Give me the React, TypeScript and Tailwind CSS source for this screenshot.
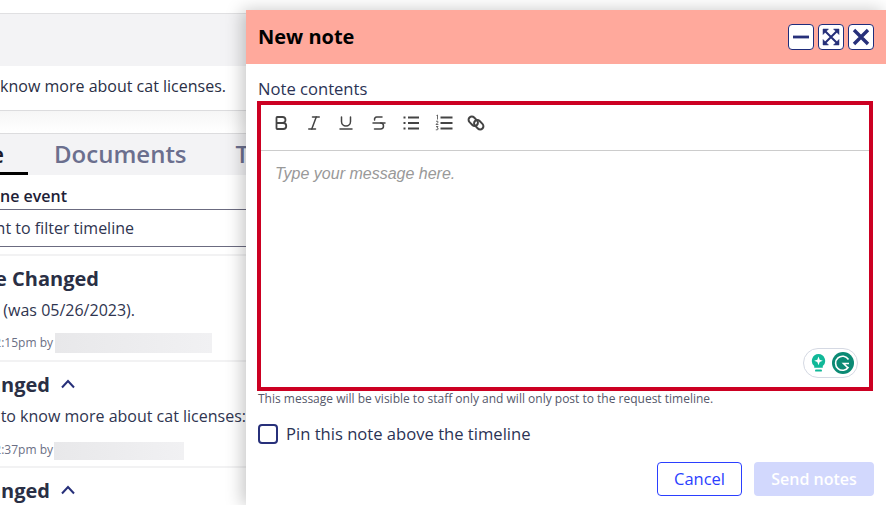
import { Bold, Italic, Underline, Strikethrough } from "lucide-react";

const font = { fontFamily: '"Open Sans", sans-serif' };

function Chevron() {
  return <svg width="16" height="10" viewBox="0 0 16 10" fill="none" stroke="#27307a" strokeWidth="2"><path d="M2 8.5 L8 2 L14 8.5" /></svg>;
}

function Event({ title, chevron, body, stamp, nameW, nameH, stampTop, stampW, h }: { title: string; chevron?: boolean; body: string; stamp: string; nameW: number; nameH: number; stampTop: string; stampW: number; h: string }) {
  return (
    <div className={`${h} border-b-2 border-[#f2f2f3] overflow-hidden`}>
      <div className="flex justify-end whitespace-nowrap text-[20px] leading-[28px] font-bold text-[#2a2f45] h-[28px] mt-[9px]" style={{ width: chevron ? 50 : 99 }}>{title}</div>
      <div className="text-[16px] leading-[22px] text-[#2f3550] whitespace-nowrap flex justify-end mt-[6px]" style={{ width: chevron ? 246 : 135 }}>{body}</div>
      <div className={`flex items-center ${stampTop} h-[20px]`}>
        <div className="flex justify-end whitespace-nowrap text-[12px] text-[#6b6f85]" style={{ width: stampW }}>{stamp}</div>
        <div className="bg-gradient-to-r from-[#e8e8ea] to-[#f1f1f3]" style={{ width: nameW, height: nameH, marginTop: nameH === 18 ? 2 : 0, marginLeft: 54 - stampW + (nameW === 157 ? 1 : 0) }} />
      </div>
    </div>
  );
}

function WinBtn({ children }: { children: React.ReactNode }) {
  return <button className="w-[26px] h-[26px] bg-white border border-[#1f2d7b] rounded-[4px] flex items-center justify-center">{children}</button>;
}

export default function App() {
  return (
    <div className="relative w-[886px] h-[505px] overflow-hidden bg-white" style={font}>
      {/* page behind */}
      <div className="w-[246px] pt-[13px]">
        <div className="h-[53px] bg-[#f3f3f5] border-t border-[#e0e0e2]" />
        <div className="h-[45px] border-b border-[#dcdcde] bg-white flex justify-end pr-[20px] pt-[9px] text-[16px] leading-[22px] text-[#2a2f45] whitespace-nowrap">I want to know more about cat licenses.</div>
        <div className="h-[22px] bg-gradient-to-b from-[#f6f6f6] to-white" />
        <div className="h-[42px] bg-[#f3f3f5] border-t border-[#dcdcde] flex whitespace-nowrap text-[24px] leading-[40px] font-semibold text-[#6b6f8e]">
          <div className="w-[28px] shrink-0 border-b-[3px] border-black flex justify-end pr-[24px] text-[#1a1a2a] h-[41px] overflow-hidden">Timeline</div>
          <div className="ml-[26px] shrink-0">Documents</div>
          <div className="ml-[49px] shrink-0">Tasks</div>
        </div>
        <div className="flex justify-end w-[67px] whitespace-nowrap text-[16px] leading-[22px] font-semibold text-[#1d2136] mt-[10px]">Timeline event</div>
        <div className="h-[38px] border-y border-[#6b6b80] mt-[2px] text-[16px] leading-[36px] text-[#2f3550]">
          <div className="flex justify-end w-[134px] whitespace-nowrap">Type an event to filter timeline</div>
        </div>
        <div className="mt-[7px] border-t-2 border-[#f2f2f3]" />
        <Event h="h-[106px]" title="Due Date Changed" body="06/02/2023 (was 05/26/2023)." stamp="May 30, 2023 12:15pm by" nameW={157} nameH={20} stampTop="mt-[12px]" stampW={53} />
        <Event h="h-[106px]" title="Message Changed" chevron body="I want to know more about cat licenses:" stamp="May 25, 2023 2:37pm by" nameW={130} nameH={18} stampTop="mt-[13px]" stampW={53} />
        <div className="flex justify-end whitespace-nowrap text-[20px] leading-[28px] font-bold text-[#2a2f45] w-[50px] mt-[9px]">Changed</div>
      </div>
      <div className="absolute left-[60px] top-[379px]"><Chevron /></div>
      <div className="absolute left-[60px] top-[485px]"><Chevron /></div>

      {/* dialog */}
      <div className="absolute left-[246px] top-[10px] right-0 bottom-0 bg-white flex flex-col shadow-[-4px_0_16px_rgba(0,0,0,0.22)]">
        <div className="h-[54px] bg-[#ffa99c] flex items-center justify-between pl-[12px] pr-[12px] shrink-0">
          <h2 className="text-[20px] font-bold text-black leading-none">New note</h2>
          <div className="flex gap-[4px]">
            <WinBtn>
              <svg width="18" height="18" viewBox="0 0 18 18"><rect x="1" y="7.6" width="16" height="2.8" fill="#27307a" /></svg>
            </WinBtn>
            <WinBtn>
              <svg width="18" height="18" viewBox="0 0 18 18" fill="#27307a" stroke="#27307a">
                <path d="M1 1h5.5L1 6.5zM17 1v5.5L11.5 1zM1 17v-5.5L6.5 17zM17 17h-5.5L17 11.5z" strokeWidth="0.5" />
                <path d="M3 3l12 12M15 3L3 15" strokeWidth="2" fill="none" />
              </svg>
            </WinBtn>
            <WinBtn>
              <svg width="18" height="18" viewBox="0 0 18 18" fill="none" stroke="#27307a" strokeWidth="3.4"><path d="M2 2l14 14M16 2L2 16" /></svg>
            </WinBtn>
          </div>
        </div>
        <div className="px-[12px] flex-1 flex flex-col">
          <label className="text-[16.6px] font-medium leading-[22px] text-[#2b3355] mt-[14px]">Note contents</label>
          <div className="h-[290px] mt-[1px] -ml-[1px] mr-[-1px] w-[616px] border-[4px] border-[#cc0022] flex flex-col relative">
            <div className="h-[36px] pb-[9px] box-content border-b border-[#cccccc] flex items-center gap-[14.5px] pl-[11px] text-[#444444]">
              <Bold size={18} strokeWidth={2.4} />
              <Italic size={18} strokeWidth={2} />
              <Underline size={18} strokeWidth={2} />
              <Strikethrough size={18} strokeWidth={2} />
              <svg width="18" height="18" viewBox="0 0 18 18" stroke="currentColor" strokeWidth="1.8" fill="none">
                <path d="M6 3.5h11M6 9h11M6 14.5h11M1.5 3.5h2M1.5 9h2M1.5 14.5h2" />
              </svg>
              <svg width="18" height="18" viewBox="0 0 18 18" stroke="currentColor" fill="none">
                <path d="M5.5 3.5h12M5.5 9h12M5.5 14.5h12" strokeWidth="1.8" />
                <path d="M1.5 1.5l1-.5v4.5M1 7.5q1-1 2 0q.4 1-2 3h2.4M1 12.5h2l-1 1.3q1.4 0 1.2 1.2t-2.4.8" strokeWidth="0.8" />
              </svg>
              <svg width="18" height="18" viewBox="0 0 18 18" stroke="currentColor" strokeWidth="2" fill="none">
                <rect x="1" y="4" width="10.5" height="6.5" rx="3.25" transform="rotate(45 6.25 7.25)" />
                <rect x="6.5" y="7.5" width="10.5" height="6.5" rx="3.25" transform="rotate(45 11.75 10.75)" />
              </svg>
            </div>
            <div className="pl-[14px] pt-[12px] text-[16px] leading-[22px] italic text-[#999999]" style={{ fontFamily: '"Liberation Sans", sans-serif' }}>Type your message here.</div>
            <div className="absolute right-[11px] bottom-[9px] w-[55px] h-[30px] bg-white border border-[#d5d9e3] rounded-full flex items-center justify-between pl-[7px] pr-[3px]">
              <svg width="15" height="18" viewBox="0 0 16 21"><path d="M8 0a8 8 0 0 1 5 14v2H3v-2A8 8 0 0 1 8 0z" fill="#11b898" /><rect x="4" y="18" width="8" height="2.4" rx="1" fill="#11b898" /><path d="M8 3l1.4 3.6L13 8l-3.6 1.4L8 13 6.6 9.4 3 8l3.6-1.4z" fill="#fff" /></svg>
              <svg width="22" height="22" viewBox="0 0 22 22"><circle cx="11" cy="11" r="11" fill="#0b8a74" /><path d="M16.5 7.5a7 7 0 1 0 0 7.5M17 11.5h-5.5l3.8 3.8" fill="none" stroke="#fff" strokeWidth="1.6" /></svg>
            </div>
          </div>
          <p className="text-[12px] leading-[16px] text-[#55586a] mt-0">This message will be visible to staff only and will only post to the request timeline.</p>
          <label className="flex items-center gap-[8px] mt-[16px] text-[16.6px] font-medium leading-[22px] text-[#2b3355]">
            <span className="w-[20px] h-[20px] border-2 border-[#27307a] rounded-[4px]" />
            Pin this note above the timeline
          </label>
          <div className="flex justify-end gap-[12px] mt-[17px]">
            <button className="w-[85px] h-[34px] bg-white border border-[#2b3fff] rounded-[4px] text-[16.5px] font-medium text-[#2b3fff]">Cancel</button>
            <button className="w-[120px] h-[34px] bg-[#d2d8fd] rounded-[4px] text-[16px] font-semibold text-white">Send notes</button>
          </div>
        </div>
      </div>
    </div>
  );
}
